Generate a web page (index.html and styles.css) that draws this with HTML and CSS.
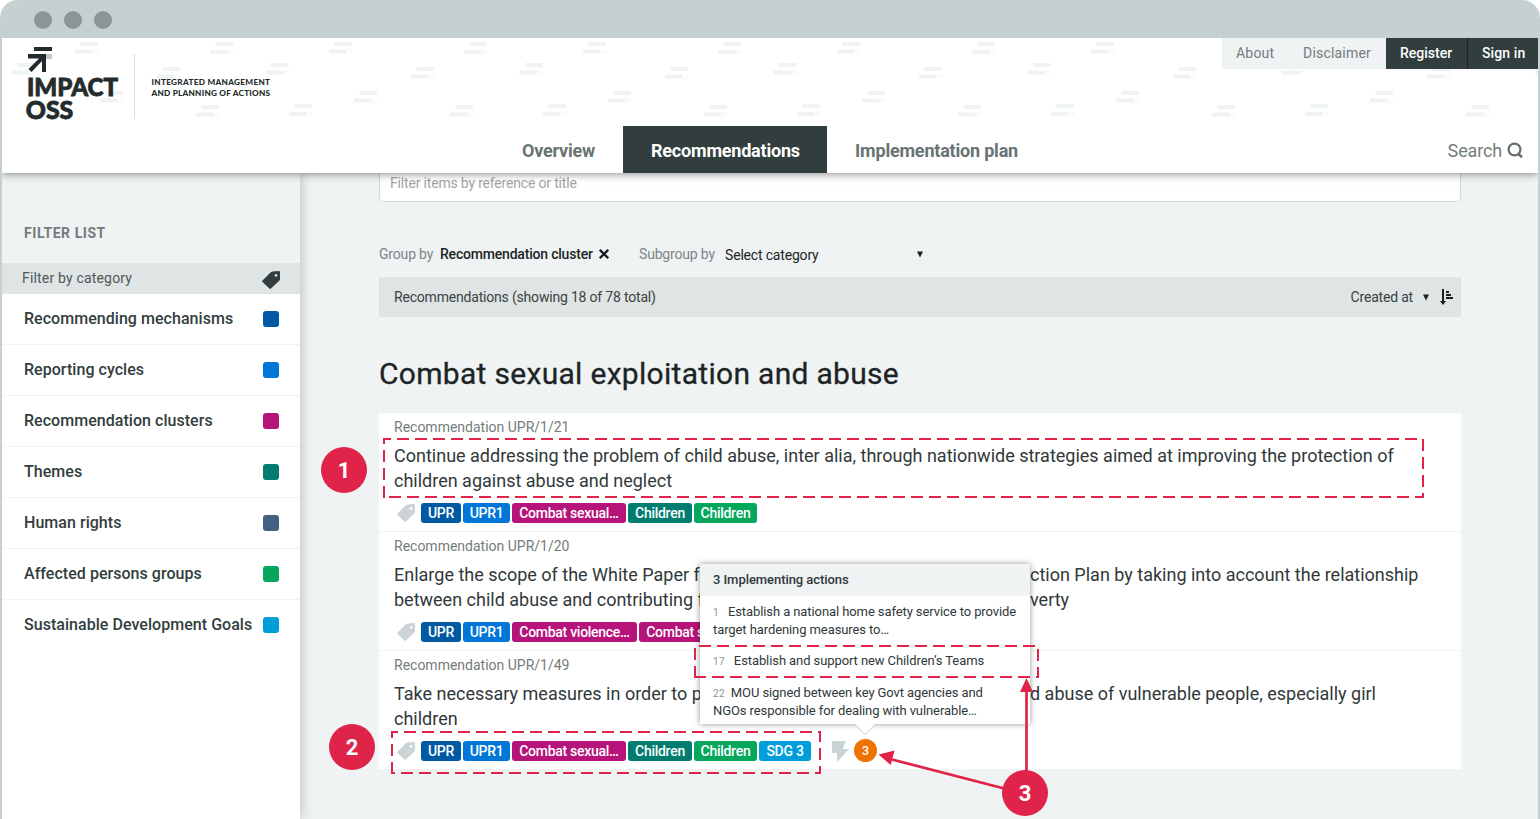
FILE: index.html
```html
<!DOCTYPE html>
<html lang="en">
<head>
<meta charset="utf-8">
<title>Impact OSS – Recommendations</title>
<link rel="stylesheet" href="styles.css">
</head>
<body>
<svg class="defs" width="0" height="0">
  <symbol id="tag" viewBox="0 0 18 18"><path fill-rule="evenodd" d="M8 1.900Q9 .7 10.500.600L16.500.1Q18 0 18 1.500V8Q18 9 17.200 9.800L9 17.500Q8.200 18.300 7.400 17.500L.5 11Q-.2 10.300.5 9.600ZM14 3a1.400 1.400 0 1 0 .01 0Z"/></symbol>
</svg>
<div class="window">
  <div class="titlebar"><i></i><i></i><i></i></div>
  <div class="screen">
    <header class="header">
      <svg class="pattern" width="1536" height="86">
        <defs>
          <g id="bars"><path fill="#f0f3f4" d="M5.500 0h17.500v4H5.500zM0 7.500h17.500v4H0z"/><path fill="none" stroke="#f4f6f6" d="M17.500 8h5v3h-5"/></g>
          <pattern id="tile" width="254" height="90" patternUnits="userSpaceOnUse">
            <use href="#bars" x="73" y="4"/><use href="#bars" x="208" y="4.300"/><use href="#bars" x="9.500" y="25"/>
            <use href="#bars" x="155" y="29"/><use href="#bars" x="98" y="53"/><use href="#bars" x="194" y="67"/><use href="#bars" x="33" y="66.300"/>
          </pattern>
        </defs>
        <rect width="1536" height="86" fill="url(#tile)"/>
      </svg>
      <div class="header-top">
        <svg class="logo" width="290" height="88">
          <path fill="#232c2c" d="M32 9h18v4H32zM26 16h18v18h-4V23L29.500 34 26.500 31 37 20.500H26z"/>
          <path fill="#c4c8c8" d="M44 16h6v5h-6z"/>
          <text class="brand" x="25" y="57.700" textLength="91" lengthAdjust="spacingAndGlyphs">IMPACT</text>
          <text class="brand" x="23.800" y="81.200" textLength="47.500" lengthAdjust="spacingAndGlyphs">OSS</text>
          <path stroke="#d6dada" d="M132.500 16v65"/>
          <text class="claim" x="149.500" y="46.600" textLength="118.500">INTEGRATED MANAGEMENT</text>
          <text class="claim" x="149.500" y="57.500" textLength="118.500">AND PLANNING OF ACTIONS</text>
        </svg>
        <nav class="account"><a>About</a><a class="disclaimer">Disclaimer</a><a class="dark">Register</a><a class="dark">Sign in</a></nav>
      </div>
      <nav class="tabs">
        <a class="overview">Overview</a><a class="active">Recommendations</a><a class="plan">Implementation plan</a>
        <a class="search"><span>Search</span><svg width="17" height="17" fill="none" stroke="#656e6e" stroke-width="2.200"><circle cx="7.500" cy="7.500" r="5.900"/><path d="M11 11.500 15 15.200" stroke-width="2.600"/></svg></a>
      </nav>
    </header>
    <div class="body">
      <aside class="sidebar">
        <h2>FILTER LIST</h2>
        <div class="category-head"><span>Filter by category</span><svg width="18" height="18" fill="#323e3e"><use href="#tag"/></svg></div>
        <div class="category"><span>Recommending mechanisms</span><i class="c-mech"></i></div>
        <div class="category"><span>Reporting cycles</span><i class="c-cycle"></i></div>
        <div class="category"><span>Recommendation clusters</span><i class="c-cluster"></i></div>
        <div class="category"><span>Themes</span><i class="c-theme"></i></div>
        <div class="category"><span>Human rights</span><i class="c-rights"></i></div>
        <div class="category"><span>Affected persons groups</span><i class="c-group"></i></div>
        <div class="category"><span>Sustainable Development Goals</span><i class="c-sdg"></i></div>
      </aside>
      <main class="main">
        <div class="filter-input">Filter items by reference or title</div>
        <div class="grouping">
          <span class="muted">Group by</span><b>Recommendation cluster</b>
          <svg width="10" height="10" stroke="#1a2020" stroke-width="2.300"><path d="M.8.800 9.200 9.200M9.200.800.800 9.200"/></svg>
          <span class="muted subgroup">Subgroup by</span><span class="select">Select category</span>
          <svg width="6" height="7" fill="#1a2020"><path d="M0 .5h6L3 6.500z"/></svg>
        </div>
        <div class="list-head">
          <span>Recommendations (showing 18 of 78 total)</span>
          <span class="sort">Created at</span>
          <svg width="6" height="7" fill="#1a2020"><path d="M0 .5h6L3 6.500z"/></svg>
          <svg class="sort-icon" width="14" height="16" fill="#1a2020"><path d="M2 0h2v12h2L3 16 0 12h2zM6 2h3v2H6zM6 5h5v2H6zM6 8h7v2H6z"/></svg>
        </div>
        <h1>Combat sexual exploitation and abuse</h1>
        <section class="list">
          <article>
            <div class="ref">Recommendation UPR/1/21</div>
            <div class="title"><p><span>Continue addressing the problem of child abuse, inter alia, through nationwide strategies aimed at improving the protection of</span></p><p><span>children against abuse and neglect</span></p></div>
            <div class="tags"><svg width="18" height="18"><use href="#tag"/></svg><b class="c-mech upr">UPR</b><b class="c-cycle upr1">UPR1</b><b class="c-cluster cs">Combat sexual…</b><b class="c-theme ch">Children</b><b class="c-group ch">Children</b></div>
          </article>
          <article>
            <div class="ref">Recommendation UPR/1/20</div>
            <div class="title"><p><span class="start">Enlarge the scope of the White Paper f</span><span>ction Plan by taking into account the relationship</span></p><p><span class="start">between child abuse and contributing f</span><span>verty</span></p></div>
            <div class="tags"><svg width="18" height="18"><use href="#tag"/></svg><b class="c-mech upr">UPR</b><b class="c-cycle upr1">UPR1</b><b class="c-cluster cv">Combat violence…</b><b class="c-cluster cs">Combat sexual…</b></div>
          </article>
          <article>
            <div class="ref">Recommendation UPR/1/49</div>
            <div class="title"><p><span class="start">Take necessary measures in order to p</span><span>d abuse of vulnerable people, especially girl</span></p><p><span>children</span></p></div>
            <div class="tags"><svg width="18" height="18"><use href="#tag"/></svg><b class="c-mech upr">UPR</b><b class="c-cycle upr1">UPR1</b><b class="c-cluster cs">Combat sexual…</b><b class="c-theme ch">Children</b><b class="c-group ch">Children</b><b class="c-sdg sdg">SDG 3</b>
              <svg class="bolt" width="18" height="21"><path d="M0 0h14L10.500 8H17L5 21V12H0z"/></svg>
              <div class="count">3
                <div class="popup">
                  <h3>3 Implementing actions</h3>
                  <div class="action"><small>1</small>Establish a national home safety service to provide<br>target hardening measures to…</div>
                  <div class="action"><small>17</small>Establish and support new Children’s Teams</div>
                  <div class="action"><small>22</small>MOU signed between key Govt agencies and<br>NGOs responsible for dealing with vulnerable…</div>
                </div>
              </div>
            </div>
          </article>
        </section>
      </main>
    </div>
  </div>
  <svg class="annotations" width="1540" height="819">
    <g fill="none" stroke="#e02349" stroke-width="2" stroke-dasharray="12 6">
      <path d="M384 498V439H1423V497H384"/>
      <path d="M392 774V732H820V773H392"/>
      <path d="M695 678V646H1038V677H695"/>
    </g>
    <g stroke="#e02349" stroke-width="2.700"><path d="M1010 790 892 759.500M1026.500 780V690"/></g>
    <g fill="#e02349">
      <path d="M878.500 754.500 894.500 750.500 890.700 765zM1026.500 678 1033 692h-13z"/>
      <circle cx="344" cy="470" r="23"/><circle cx="352" cy="747" r="23"/><circle cx="1025" cy="793" r="23"/>
    </g>
    <g class="numbers"><text x="344" y="478">1</text><text x="352" y="755">2</text><text x="1025" y="801">3</text></g>
  </svg>
</div>
</body>
</html>
```
FILE: styles.css
```css
* { box-sizing: border-box; }
body { margin: 0; font-family: Roboto, sans-serif; color: #1d2424; background: #fff; }
h1, h2, h3, p { margin: 0; }
.defs { position: absolute; }
.window { position: relative; width: 1540px; height: 819px; background: #c6d0d1; border-radius: 18px 18px 0 0; overflow: hidden; }
.titlebar { height: 38px; display: flex; gap: 12px; padding: 11px 34px; }
.titlebar i { width: 18px; height: 18px; border-radius: 50%; background: #8c9595; }
.screen { height: 781px; margin: 0 2px; background: #eff3f4; overflow: hidden; }

.header { position: relative; z-index: 3; height: 135px; background: #fff; box-shadow: 0 0 9px rgba(0,0,0,.55); }
.pattern { position: absolute; left: 0; top: 0; }
.header-top { position: relative; height: 88px; display: flex; justify-content: space-between; }
.brand { font: 900 25px Lato, sans-serif; fill: #232c2c; stroke: #232c2c; stroke-width: .8px; }
.claim { font: 900 8.200px Lato, sans-serif; fill: #232c2c; }
.account { display: flex; height: 31px; background: #eff3f4; font-size: 14px; line-height: 30px; letter-spacing: .2px; color: #747c7c; }
.account a { width: 67px; padding-left: 14px; white-space: nowrap; }
.account .disclaimer { width: 97px; }
.account .dark { width: 81px; background: #323e3e; color: #fff; font-weight: 500; letter-spacing: 0; }
.account .dark + .dark { width: 71px; border-left: 1px solid #1d2424; letter-spacing: .1px; }
.tabs { position: relative; height: 47px; display: flex; align-items: stretch; padding-left: 492px; font-size: 18px; line-height: 49px; font-weight: 700; letter-spacing: -.2px; color: #687373; }
.tabs a { padding: 0 28px; white-space: nowrap; }
.tabs .overview { width: 129px; }
.tabs .active { background: #323e3e; color: #fff; width: 204px; }
.tabs .search { margin-left: auto; padding: 2px 14px 0 0; display: flex; align-items: center; gap: 5px; font-weight: 400; letter-spacing: -.15px; color: #747c7c; }

.body { display: flex; height: 646px; }
.sidebar { position: relative; z-index: 1; width: 298px; flex: none; background: #eff3f4; box-shadow: 0 0 12px rgba(0,0,0,.26); }
.sidebar::after { content: ""; display: block; height: 169px; background: #fff; }
.sidebar h2 { height: 90px; padding: 50px 22px 0; font-size: 14px; line-height: 20px; font-weight: 700; letter-spacing: .55px; color: #747c7c; }
.category-head { height: 31px; background: #dfe4e4; display: flex; justify-content: space-between; align-items: center; padding: 2px 20px 0 20px; font-size: 14px; letter-spacing: .18px; color: #4f5959; }
.category-head span { padding-bottom: 3px; }
.category { height: 51px; display: flex; justify-content: space-between; align-items: center; padding: 0 21px 0 22px; background: #fff; border-bottom: 1px solid #eff3f4; font-size: 16px; font-weight: 500; letter-spacing: .04px; color: #323e3e; white-space: nowrap; }
.category:last-child { border-color: #fff; }
.category span { padding-bottom: 2px; }
.category i { width: 16px; height: 16px; border-radius: 3px; }
.c-mech { background: #0059a3; }
.c-cycle { background: #0077d8; }
.c-cluster { background: #b6137b; }
.c-theme { background: #007d70; }
.c-rights { background: #426183; }
.c-group { background: #05a75d; }
.c-sdg { background: #009ddb; }

.main { width: 1161px; padding-left: 79px; flex: none; }
.main > * { width: 1082px; }
.filter-input { height: 29px; background: #fff; border: 1px solid #d3dada; border-top: 0; border-radius: 0 0 5px 5px; padding-left: 10px; font-size: 14px; line-height: 20px; color: #9fa6a6; letter-spacing: -.18px; }
.grouping { height: 75px; display: flex; align-items: center; padding-top: 29px; font-size: 14px; letter-spacing: -.18px; white-space: nowrap; }
.grouping .muted { color: #7c8585; width: 61px; }
.grouping b { font-weight: 500; width: 159px; letter-spacing: -.2px; }
.grouping .subgroup { margin-left: 30px; width: 86px; }
.select { width: 192px; padding-top: 2px; }
.list-head { height: 40px; background: #dfe4e4; display: flex; align-items: center; padding: 0 7px 0 15px; font-size: 14px; letter-spacing: -.19px; color: #3a4343; }
.list-head .sort { margin-left: auto; margin-right: 10px; }
.sort-icon { margin-left: 11px; }
h1 { height: 96px; font-size: 30px; line-height: 113px; font-weight: 400; letter-spacing: .3px; -webkit-text-stroke: .3px #1d2424; white-space: nowrap; }
.list { background: #fff; }
article { height: 119px; padding: 4px 15px 0; border-bottom: 1px solid #eff3f4; }
article:last-child { height: 118px; border-bottom: 0; }
.ref { font-size: 14px; line-height: 20px; color: #747c7c; }
.title { padding: 6px 0 10px; font-size: 18px; line-height: 25px; letter-spacing: 0; color: #30383a; }
.title p { display: flex; white-space: nowrap; }
.title .start { flex: 0 0 636px; }
.tags { display: flex; align-items: center; gap: 2px; height: 20px; fill: #cbd4d5; padding-left: 3px; }
.tags > svg:first-child { margin-right: 4px; }
.tags b { height: 20px; border-radius: 3px; color: #fff; font-size: 14px; line-height: 20px; font-weight: 500; letter-spacing: -.28px; text-align: center; white-space: nowrap; }
.upr { width: 40px; } .upr1 { width: 47px; } .cs { width: 114px; } .cv { width: 125px; } .ch { width: 64px; } .c-group.ch { width: 63px; } .sdg { width: 52px; }
.tags .bolt { margin-left: 19px; }
.count { position: relative; width: 23px; height: 23px; margin: -1px 0 0 2px; border-radius: 50%; background: #ee7402; color: #fff; font-size: 12.500px; line-height: 23px; font-weight: 500; text-align: center; }
.popup { position: absolute; left: -154px; bottom: 38px; width: 330px; height: 160px; background: #fff; box-shadow: 0 0 6px rgba(0,0,0,.42); color: #30383a; text-align: left; font-size: 13px; font-weight: 400; letter-spacing: -.09px; line-height: 18px; white-space: nowrap; }
.popup::after { content: ""; position: absolute; left: 155px; top: 100%; width: 20px; height: 10px; background: #fff; clip-path: polygon(0 0, 100% 0, 50% 100%); }
.popup::before { content: ""; position: absolute; left: 154px; top: 100%; width: 22px; height: 11px; background: #c8caca; clip-path: polygon(0 0, 100% 0, 50% 100%); }
.popup h3 { height: 32px; padding-left: 13px; background: #eff3f4; font-size: 13px; line-height: 32px; font-weight: 500; letter-spacing: -.06px; }
.action { padding: 6px 13px; border-bottom: 1px solid #eff3f4; }
.action:nth-child(2) { padding-top: 7px; }
.action:last-child { border: 0; padding-top: 7px; }
.action small { font-size: 10px; line-height: 0; color: #8b9393; letter-spacing: .3px; margin-right: 9px; }
.action:last-child small { margin-right: 6px; }
.annotations { position: absolute; left: 0; top: 0; z-index: 5; }
.numbers { font: 700 22px Roboto, sans-serif; fill: #fff; text-anchor: middle; }
```
